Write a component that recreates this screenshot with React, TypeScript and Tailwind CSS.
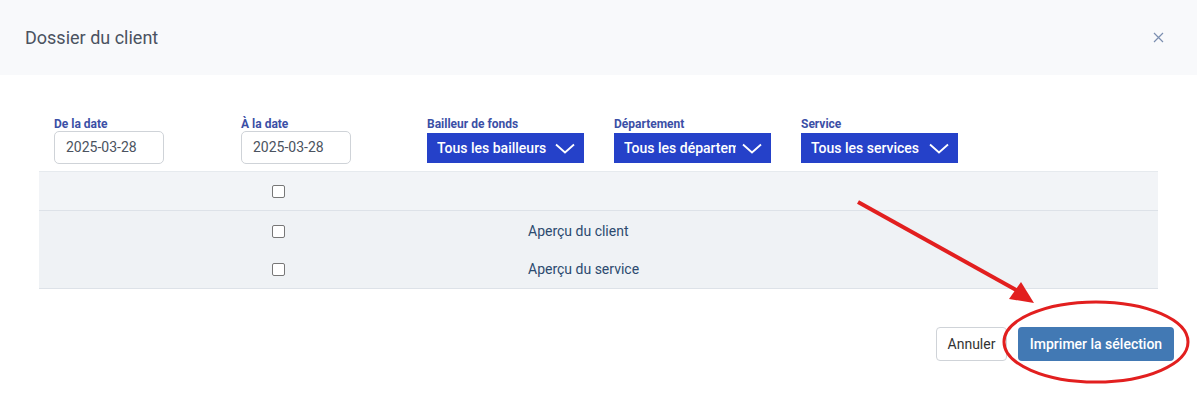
import React from "react";

const font = { fontFamily: "Roboto, 'Liberation Sans', sans-serif" };

function Chevron() {
  return (
    <svg width="20" height="11" viewBox="0 0 20 11" fill="none" className="shrink-0">
      <path d="M1 1.5 L10 9.5 L19 1.5" stroke="white" strokeWidth="1.8" />
    </svg>
  );
}

function Field({ label, className, children }: { label: string; className: string; children: React.ReactNode }) {
  return (
    <div className={`${className} shrink-0 flex flex-col`}>
      <div className="text-[12px] font-bold leading-[14px] text-[#3b4fa6]">{label}</div>
      {children}
    </div>
  );
}

function DateInput({ value }: { value: string }) {
  return (
    <div className="w-[110px] h-[33px] border border-[#cfd3d8] rounded-[5px] flex items-center pl-[11px] text-[14px] text-[#4b5360]">
      {value}
    </div>
  );
}

function Select({ text }: { text: string }) {
  return (
    <div className="mt-[2px] w-[157px] h-[30px] bg-[#2541c9] flex items-center justify-between pl-[10px] pr-[9px] text-white text-[14px] font-medium overflow-hidden">
      <span className="whitespace-nowrap overflow-hidden w-[112px]">{text}</span>
      <Chevron />
    </div>
  );
}

function Checkbox() {
  return <div className="w-[13px] h-[13px] border border-[#777] rounded-[2px] bg-white" />;
}

export default function App() {
  const rows = ["Aperçu du client", "Aperçu du service"];

  return (
    <div className="relative w-[1197px] h-[393px] bg-white overflow-hidden" style={font}>
      <div className="h-[75px] bg-[#f8f9fb] flex items-center justify-between pl-[25px] pr-[33px]">
        <h1 className="text-[18px] text-[#4a5260]">Dossier du client</h1>
        <svg width="11" height="11" viewBox="0 0 11 11">
          <path d="M1 1 L10 10 M10 1 L1 10" stroke="#7b8fb0" strokeWidth="1.2" />
        </svg>
      </div>

      <div className="flex pl-[54px] pt-[42px]">
        <Field label="De la date" className="w-[187px]"><DateInput value="2025-03-28" /></Field>
        <Field label="À la date" className="w-[186px]"><DateInput value="2025-03-28" /></Field>
        <Field label="Bailleur de fonds" className="w-[187px]"><Select text="Tous les bailleurs" /></Field>
        <Field label="Département" className="w-[187px]"><Select text="Tous les départements" /></Field>
        <Field label="Service" className="w-[187px]"><Select text="Tous les services" /></Field>
      </div>

      <div className="ml-[39px] mt-[7px] w-[1119px] border-t border-[#e6eaee]">
        <div className="h-[39px] bg-[#f2f4f7] border-b border-[#dde2e8] flex items-center">
          <div className="w-[233px]" />
          <Checkbox />
        </div>
        <div className="bg-[#eff2f5] border-b border-[#dde2e8] pt-[1px]">
          {rows.map((r) => (
            <div key={r} className="h-[38px] flex items-center">
              <div className="w-[233px]" />
              <Checkbox />
              <div className="w-[243px]" />
              <span className="text-[14px] text-[#2c4a6f]">{r}</span>
            </div>
          ))}
        </div>
      </div>

      <div className="flex justify-end gap-[11px] pr-[23px] mt-[38px]">
        <button className="w-[71px] h-[34px] border border-[#cfd3d8] rounded-[4px] bg-white text-[14px] text-[#333]">
          Annuler
        </button>
        <button className="w-[156px] h-[34px] rounded-[4px] bg-[#4279b4] text-[14px] font-medium text-white">
          Imprimer la sélection
        </button>
      </div>

      <svg className="absolute left-0 top-0 pointer-events-none" width="1197" height="393">
        <line x1="858" y1="202" x2="1018" y2="291" stroke="#e21f1f" strokeWidth="4" />
        <polygon points="1009,299 1021,282 1034,303" fill="#e21f1f" />
        <ellipse cx="1096" cy="342" rx="92" ry="40" fill="none" stroke="#e21f1f" strokeWidth="3" />
      </svg>
    </div>
  );
}
